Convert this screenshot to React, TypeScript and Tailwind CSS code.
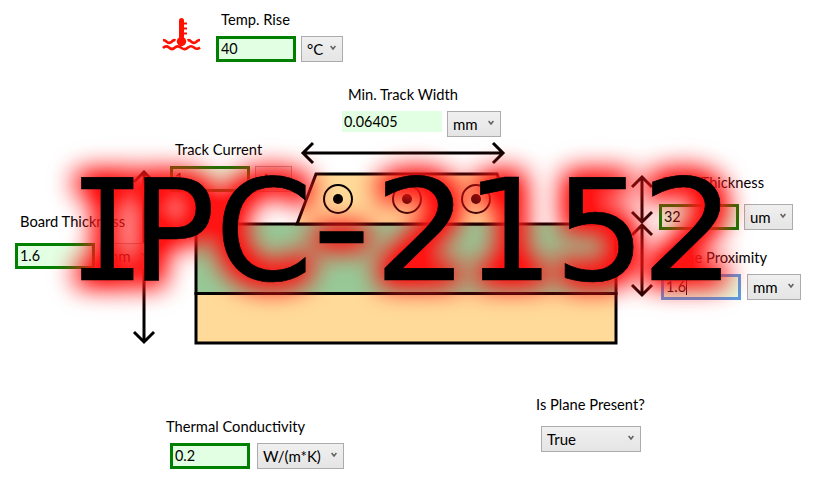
import React from 'react';

const FONT = "font-['Lato','Open_Sans',sans-serif] text-[15px] leading-[20px] text-black whitespace-nowrap";

function Select({ unit, className }: { unit: string; className: string }) {
  return (
    <div className={`flex h-[26px] shrink-0 items-center justify-between border border-[#acacac] bg-linear-to-b from-[#f0f0f0] to-[#e5e5e5] pl-[5px] pr-[6px] ${className}`}>
      <span>{unit}</span>
      <svg width="6" height="6" viewBox="0 0 6 6" className="mb-[3px] shrink-0">
        <path d="M0.6 1 L3 4 L5.4 1" fill="none" stroke="#606060" strokeWidth="1.5" />
      </svg>
    </div>
  );
}

type FieldProps = {
  label: string;
  labelClass: string;
  place: string;
  value?: string;
  inputClass?: string;
  unit: string;
  unitClass: string;
  gap?: string;
  caret?: boolean;
};

function Field({ label, labelClass, place, value, inputClass, unit, unitClass, gap = 'gap-[5px]', caret }: FieldProps) {
  return (
    <div className={`absolute flex flex-col items-start ${place}`}>
      <div className={`-mt-px mb-px text-[14.7px] ${labelClass}`}>{label}</div>
      <div className={`flex items-start ${gap}`}>
        {value !== undefined && (
          <div className={`flex shrink-0 items-center bg-[#e3ffe3] text-[14.4px] ${inputClass ?? 'h-[26px] w-[80px] border-3 border-[#008000] pl-[2px]'}`}>
            <span>{value}</span>
            {caret && <span className="h-[16px] w-px bg-black" />}
          </div>
        )}
        <Select unit={unit} className={unitClass} />
      </div>
    </div>
  );
}

function Thermometer() {
  return (
    <svg className="absolute left-[162px] top-[16px]" width="40" height="36" viewBox="0 0 40 36" fill="none" stroke="#ff1100">
      <path d="M19.5 4.500V25" strokeWidth="5" strokeLinecap="round" />
      <circle cx="19.500" cy="25.500" r="4.700" fill="#ff1100" stroke="none" />
      <path d="M21 7.500H25M21 12.500H25M21 17.500H25" strokeWidth="2" />
      <path d="M1 24 Q3 24 5 26 Q7.500 28 10 25.500 Q11.500 23.500 13.500 24.500M38 24 Q36 24 34 26 Q31.500 28 29 25.500 Q27.500 23.500 25.500 24.500" strokeWidth="2.600" />
      <path d="M1 32 Q4 29 7 31.500 Q10 34.500 13 31.500 Q16 29 19.500 32 Q23 34.500 26 31.500 Q29 29 32 31.500 Q35 34 38 31.500" strokeWidth="2.600" />
    </svg>
  );
}

function Diagram() {
  return (
    <svg className="absolute left-0 top-0" width="819" height="484" viewBox="0 0 819 484" fill="none" stroke="#000" strokeWidth="3">
      <rect x="196" y="224" width="420" height="69.500" fill="#97c997" />
      <rect x="196" y="293.500" width="420" height="49.500" fill="#ffda99" />
      <path d="M316 174H497L516 224H297Z" fill="#ffda99" />
      {[338, 407, 476].map((x) => (
        <g key={x}>
          <circle cx={x} cy="199" r="14" strokeWidth="2" />
          <circle cx={x} cy="199" r="5" fill="#000" stroke="none" />
        </g>
      ))}
      <path d="M303 153H503M313 143L303 153L313 163M493 143L503 153L493 163" />
      <path d="M144 172V342M134 182L144 172L154 182M134 332L144 342L154 332" />
      <path d="M642 177V222M632 187L642 177L652 187M632 212L642 222L652 212" />
      <path d="M642 225V295M632 235L642 225L652 235M632 285L642 295L652 285" />
    </svg>
  );
}

const GLYPHS = [
  { ch: 'I', x: 69, y: 280, sx: 0.91, mono: true },
  { ch: 'P', x: 131, y: 280, sx: 1, mono: false },
  { ch: 'C', x: 215, y: 280, sx: 1, mono: false },
  { ch: '-', x: 312, y: 275.5, sx: 1.17, mono: false },
  { ch: '2', x: 374, y: 280, sx: 1.06, mono: false },
  { ch: '1', x: 465, y: 280, sx: 1, mono: false },
  { ch: '5', x: 554, y: 280, sx: 1.03, mono: false },
  { ch: '2', x: 641, y: 280, sx: 1.06, mono: false },
];

function Title() {
  return (
    <svg className="pointer-events-none absolute left-0 top-0" width="819" height="484" viewBox="0 0 819 484">
      <defs>
        <filter id="glow" filterUnits="userSpaceOnUse" x="0" y="60" width="819" height="360" colorInterpolationFilters="sRGB">
          <feMorphology in="SourceAlpha" operator="dilate" radius="4" result="wide" />
          <feGaussianBlur in="wide" stdDeviation="13" result="b1" />
          <feComponentTransfer in="b1" result="c1">
            <feFuncA type="linear" slope="1.45" />
          </feComponentTransfer>
          <feFlood floodColor="#ff1414" result="red" />
          <feComposite in="red" in2="c1" operator="in" result="g1" />
          <feGaussianBlur in="wide" stdDeviation="17" result="b2" />
          <feComponentTransfer in="b2" result="c2">
            <feFuncA type="linear" slope="0.35" />
          </feComponentTransfer>
          <feComposite in="red" in2="c2" operator="in" result="g2" />
          <feMerge>
            <feMergeNode in="g2" />
            <feMergeNode in="g1" />
            <feMergeNode in="SourceGraphic" />
          </feMerge>
        </filter>
      </defs>
      <g filter="url(#glow)" fontSize="140" stroke="#000" strokeWidth="0.7">
        {GLYPHS.map((g) => (
          <text
            key={g.x}
            transform={`translate(${g.x} ${g.y}) scale(${g.sx} 1)`}
            fontFamily={g.mono ? "'DejaVu Sans Mono', monospace" : "'DejaVu Sans', sans-serif"}
          >
            {g.ch}
          </text>
        ))}
      </g>
    </svg>
  );
}

export default function App() {
  return (
    <main className={`relative h-[484px] w-[819px] overflow-hidden bg-white ${FONT}`}>
      <Diagram />
      <Thermometer />
      <Field place="left-[216px] top-[10px]" label="Temp. Rise" labelClass="h-[26px] pl-[5px]" value="40" unit="°C" unitClass="w-[42px]" />
      <Field place="left-[342px] top-[85px]" label="Min. Track Width" labelClass="h-[26px] pl-[6px]" value="0.06405" inputClass="h-[21px] w-[100px] pl-[2px]" unit="mm" unitClass="w-[54px]" />
      <Field place="left-[170px] top-[140px]" label="Track Current" labelClass="h-[26px] pl-[5px]" value="1" unit="A" unitClass="w-[37px]" />
      <Field place="left-[15px] top-[212px]" label="Board Thickness" labelClass="h-[31px] pl-[5px]" value="1.6" unit="mm" unitClass="w-[54px]" />
      <Field place="left-[659px] top-[173px]" label="Track Thickness" labelClass="h-[31px] w-[105px] flex justify-end" value="32" unit="um" unitClass="w-[49px]" />
      <Field place="left-[661px] top-[248px]" label="Plane Proximity" labelClass="h-[26px] w-[106px] flex justify-end" value="1.6" caret inputClass="h-[26px] w-[80px] border-3 border-[#569de5] pl-[2px]" gap="gap-[6px]" unit="mm" unitClass="w-[54px]" />
      <Field place="left-[170px] top-[417px]" label="Thermal Conductivity" labelClass="h-[26px] -ml-[4px]" value="0.2" gap="gap-[7px]" unit="W/(m*K)" unitClass="w-[87px]" />
      <Field place="left-[541px] top-[395px]" label="Is Plane Present?" labelClass="h-[31px] -ml-[5px]" unit="True" unitClass="w-[100px]" />
      <Title />
    </main>
  );
}
